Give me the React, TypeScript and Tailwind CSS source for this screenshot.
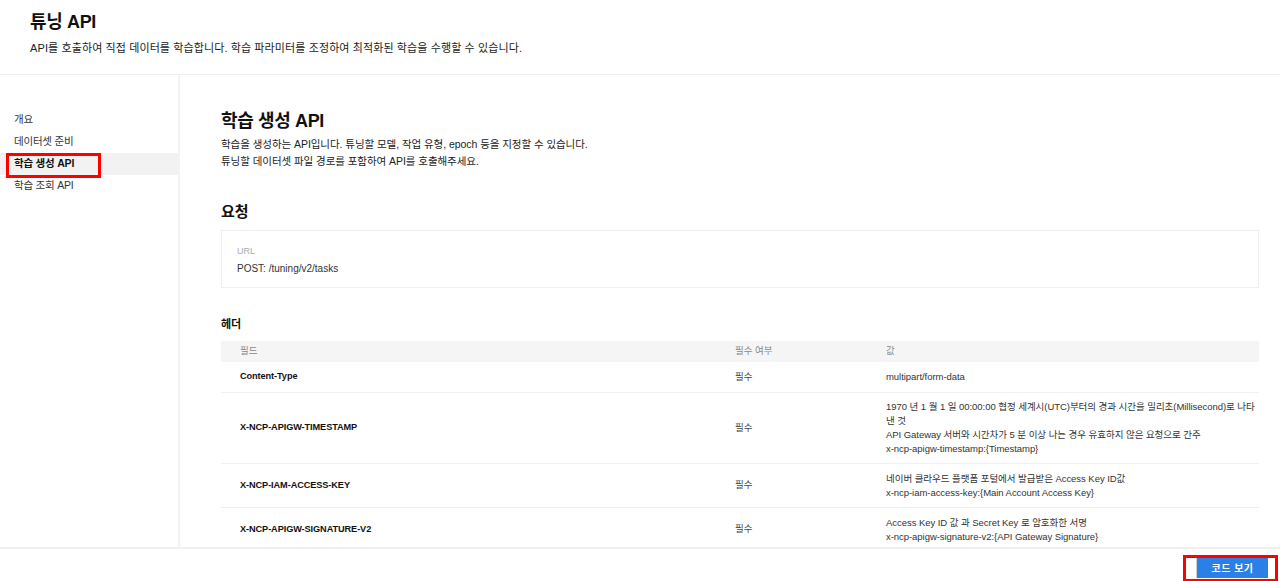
import React from "react";

type HeaderRow = {
  name: string;
  required: string;
  lines: string[];
  h: string;
};

const rows: HeaderRow[] = [
  { name: "Content-Type", required: "필수", lines: ["multipart/form-data"], h: "h-[31px]" },
  {
    name: "X-NCP-APIGW-TIMESTAMP",
    required: "필수",
    lines: [
      "1970 년 1 월 1 일 00:00:00 협정 세계시(UTC)부터의 경과 시간을 밀리초(Millisecond)로 나타",
      "낸 것",
      "API Gateway 서버와 시간차가 5 분 이상 나는 경우 유효하지 않은 요청으로 간주",
      "x-ncp-apigw-timestamp:{Timestamp}",
    ],
    h: "h-[71px]",
  },
  {
    name: "X-NCP-IAM-ACCESS-KEY",
    required: "필수",
    lines: ["네이버 클라우드 플랫폼 포털에서 발급받은 Access Key ID값", "x-ncp-iam-access-key:{Main Account Access Key}"],
    h: "h-[44px]",
  },
  {
    name: "X-NCP-APIGW-SIGNATURE-V2",
    required: "필수",
    lines: ["Access Key ID 값 과 Secret Key 로 암호화한 서명", "x-ncp-apigw-signature-v2:{API Gateway Signature}"],
    h: "h-[44px]",
  },
];

const navItems = ["개요", "데이터셋 준비", "학습 생성 API", "학습 조회 API"];

export default function App() {
  return (
    <div className="relative flex h-[581px] w-[1280px] flex-col overflow-hidden bg-white font-['Liberation_Sans','Noto_Sans_CJK_KR',sans-serif] text-[#222]">
      {/* page header */}
      <header className="h-[75px] shrink-0 border-b border-[#efefef] pl-[30px] pt-[11px]">
        <h1 className="text-[18px] font-bold leading-[22px] tracking-[-0.02em] text-[#111]">튜닝 API</h1>
        <p className="mt-[7px] whitespace-nowrap text-[11px] leading-[16px] tracking-[0.01em] text-[#222]">
          API를 호출하여 직접 데이터를 학습합니다. 학습 파라미터를 조정하여 최적화된 학습을 수행할 수 있습니다.
        </p>
      </header>

      <div className="flex min-h-0 flex-1">
        {/* side navigation */}
        <nav className="relative w-[180px] shrink-0 border-r-2 border-[#f3f3f3] pt-[34px]">
          {navItems.map((item, i) => (
            <div
              key={item}
              className={
                i === 2
                  ? "flex h-[22px] items-center bg-[#f2f2f2] pl-[14px] text-[10.5px] font-bold tracking-[-0.02em] text-[#111]"
                  : "flex h-[22px] items-center pl-[14px] text-[10.5px] tracking-[-0.02em] text-[#333]"
              }
            >
              {item}
            </div>
          ))}
          <div className="pointer-events-none absolute left-[6px] top-[78px] h-[25px] w-[95px] border-[3px] border-[#ff0000]" />
        </nav>

        {/* main content */}
        <main className="min-w-0 flex-1 overflow-hidden pl-[41px] pr-[21px] pt-[34px]">
          <h2 className="text-[18px] font-bold leading-[24px] tracking-[-0.02em] text-[#111]">학습 생성 API</h2>
          <div className="mt-[3px] whitespace-nowrap text-[10.5px] leading-[17px] tracking-[-0.005em] text-[#222]">
            <p>학습을 생성하는 API입니다. 튜닝할 모델, 작업 유형, epoch 등을 지정할 수 있습니다.</p>
            <p>튜닝할 데이터셋 파일 경로를 포함하여 API를 호출해주세요.</p>
          </div>

          <h3 className="mt-[32px] text-[15px] font-bold leading-[20px] text-[#111]">요청</h3>
          <div className="mt-[8px] h-[58px] border border-[#efefef] pl-[15px] pt-[14px]">
            <div className="text-[9px] leading-[12px] text-[#aaa]">URL</div>
            <div className="mt-[5px] text-[10px] leading-[14px] text-[#333]">POST: /tuning/v2/tasks</div>
          </div>

          <h4 className="mt-[28px] text-[11px] font-bold leading-[16px] text-[#111]">헤더</h4>

          <div className="mt-[9px]">
            <div className="grid h-[21px] grid-cols-[495px_151px_1fr] items-center bg-[#f5f5f5] text-[9.5px] text-[#888]">
              <div className="pl-[19px]">필드</div>
              <div className="pl-[19px]">필수 여부</div>
              <div className="pl-[19px]">값</div>
            </div>
            {rows.map((r) => (
              <div
                key={r.name}
                className={`grid ${r.h} grid-cols-[495px_151px_1fr] items-center border-b border-[#efefef] text-[9.5px]`}
              >
                <div className="pl-[19px] text-[9.2px] font-bold tracking-[-0.01em] text-[#111]">{r.name}</div>
                <div className="pl-[19px] text-[#444]">{r.required}</div>
                <div className="whitespace-nowrap pl-[19px] leading-[14px] tracking-[-0.005em] text-[#333]">
                  {r.lines.map((l) => (
                    <div key={l}>{l}</div>
                  ))}
                </div>
              </div>
            ))}
          </div>
        </main>
      </div>

      {/* bottom action bar */}
      <footer className="relative z-10 flex h-[34px] shrink-0 items-start justify-end border-t-2 border-[#f0f0f0] bg-white pr-[12px] pt-[9px]">
        <button className="flex h-[20px] w-[72px] items-center justify-center border-l border-[#d0d0d0] bg-[#2a80e6] text-[10px] font-bold tracking-[0.05em] text-white">
          코드 보기
        </button>
        <div className="pointer-events-none absolute left-[1183px] top-[6px] h-[27px] w-[95px] border-[3px] border-[#ff0000]" />
      </footer>
    </div>
  );
}
